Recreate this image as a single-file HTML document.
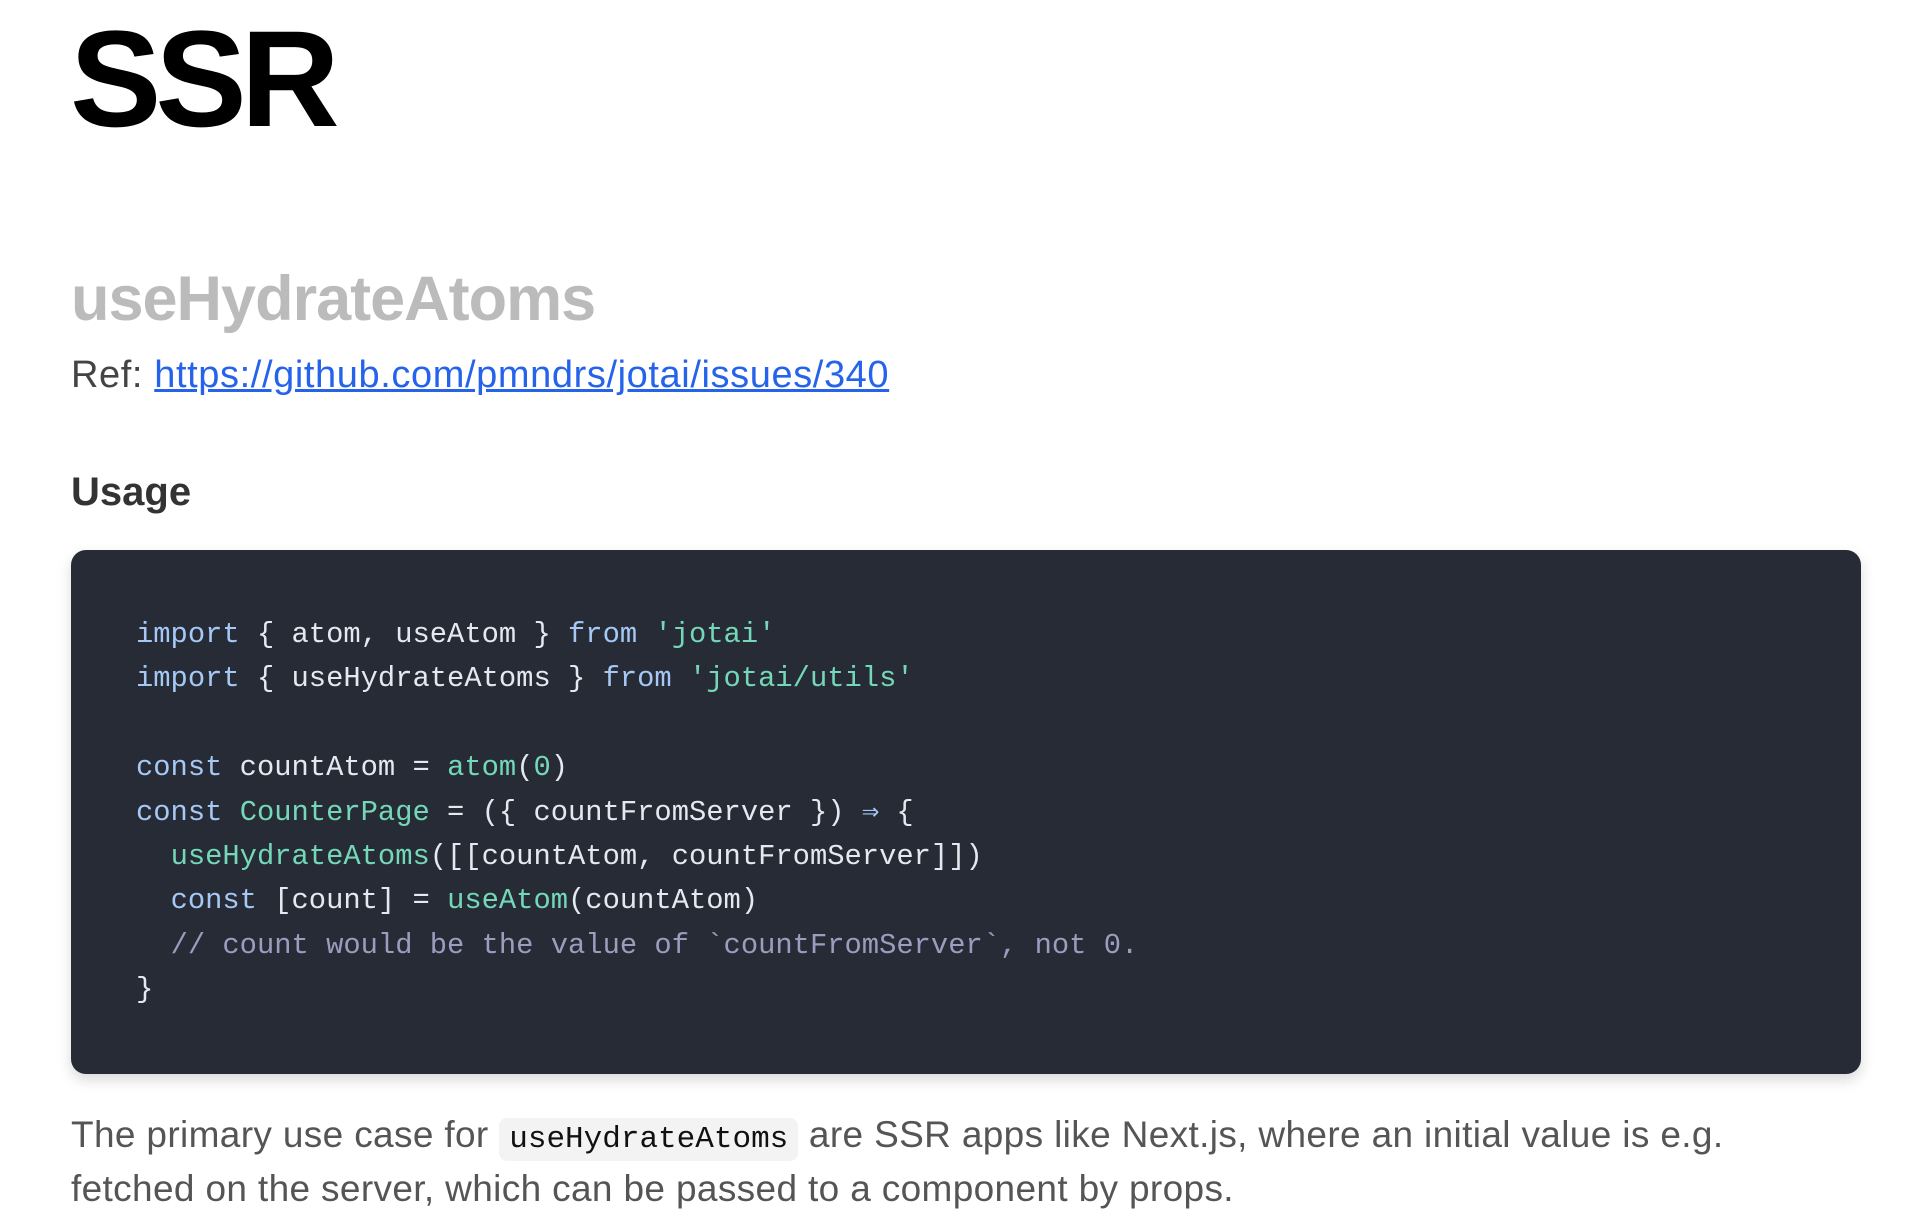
<!DOCTYPE html>
<html><head><meta charset="utf-8"><style>
html,body{margin:0;padding:0;background:#fff;width:1906px;height:1232px;overflow:hidden;font-family:"Liberation Sans",sans-serif}
.a{position:absolute;white-space:nowrap;margin:0}
#ssr{left:70px;top:-2px;font-size:137px;font-weight:bold;letter-spacing:-6px;color:#000;line-height:1.2}
#h2{left:71px;top:262px;font-size:63px;font-weight:bold;color:#bbb;letter-spacing:-1px;line-height:1.2}
#ref{left:71px;top:353px;font-size:38px;letter-spacing:0.6px;color:#444;line-height:1.2}
#ref a{color:#2563eb;text-decoration:underline}
#usage{left:71px;top:468px;font-size:40px;font-weight:bold;color:#333;line-height:1.2}
#code{position:absolute;left:71px;top:550px;width:1790px;height:524px;background:#262b36;border-radius:15px;box-shadow:0 6px 14px rgba(0,0,0,.15)}
pre{position:absolute;left:136px;top:613px;margin:0;font-family:"Liberation Mono","DejaVu Sans Mono",monospace;font-size:28.8px;line-height:44.4px;color:#e6e8ef}
.k{color:#a6c8f5}.g{color:#74d8b8}.s{color:#74d8b8}.c{color:#9a9dbd}
.p{left:71px;font-size:37px;letter-spacing:0.35px;color:#555;line-height:1.2}
code{font-family:"Liberation Mono",monospace;font-size:31px;letter-spacing:0;color:#111;background:#f3f3f3;border-radius:8px;padding:4px 10px}
</style></head><body>
<div class="a" id="ssr">SSR</div>
<div class="a" id="h2">useHydrateAtoms</div>
<div class="a" id="ref">Ref: <a>https://github.com/pmndrs/jotai/issues/340</a></div>
<div class="a" id="usage">Usage</div>
<div id="code"></div>
<pre><span class="k">import</span> { atom, useAtom } <span class="k">from</span> <span class="s">'jotai'</span>
<span class="k">import</span> { useHydrateAtoms } <span class="k">from</span> <span class="s">'jotai/utils'</span>

<span class="k">const</span> countAtom = <span class="g">atom</span>(<span class="g">0</span>)
<span class="k">const</span> <span class="g">CounterPage</span> = ({ countFromServer }) <span class="k">⇒</span> {
  <span class="g">useHydrateAtoms</span>([[countAtom, countFromServer]])
  <span class="k">const</span> [count] = <span class="g">useAtom</span>(countAtom)
  <span class="c">// count would be the value of `countFromServer`, not 0.</span>
}</pre>
<div class="a p" style="top:1113px">The primary use case for <code>useHydrateAtoms</code> are SSR apps like Next.js, where an initial value is e.g.</div>
<div class="a p" style="top:1167px">fetched on the server, which can be passed to a component by props.</div>
</body></html>
